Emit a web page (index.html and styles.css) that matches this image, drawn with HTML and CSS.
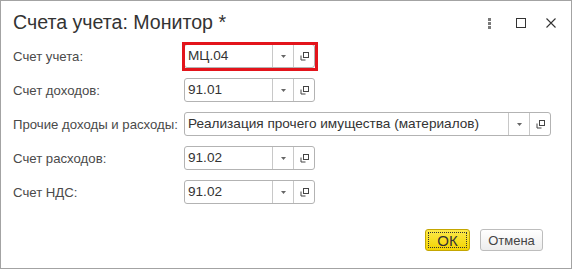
FILE: index.html
```html
<!DOCTYPE html>
<html lang="ru">

<head>
    <meta charset="UTF-8">
    <title>Счета учета: Монитор *</title>
    <link rel="stylesheet" href="styles.css">
</head>

<body>
    <div class="dialog">
        <div class="titlebar">
            <h1 class="title">Счета учета: Монитор *</h1>
            <div class="win-ctrls">
                <svg class="ico-dots" width="3" height="11" viewBox="0 0 3 11">
                    <rect x="0" y="0" width="3" height="3" fill="#7a7a7a" />
                    <rect x="0" y="4" width="3" height="3" fill="#7a7a7a" />
                    <rect x="0" y="8" width="3" height="3" fill="#7a7a7a" />
                </svg>
                <svg class="ico-max" width="10" height="10" viewBox="0 0 10 10">
                    <rect x="0.5" y="0.5" width="9" height="9" fill="none" stroke="#333" />
                </svg>
                <svg class="ico-close" width="10" height="10" viewBox="0 0 10 10">
                    <path d="M0.5 0.5 L9.5 9.5 M9.5 0.5 L0.5 9.5" stroke="#333" stroke-width="1.1" />
                </svg>
            </div>
        </div>

        <div class="form">
            <div class="row">
                <label>Счет учета:</label>
                <div class="field field-short">
                    <span class="val">МЦ.04</span>
                    <span class="fbtn"><svg width="5" height="3" viewBox="0 0 5 3"><path d="M0 0H5L2.5 3Z" fill="#666" /></svg></span>
                    <span class="fbtn"><svg width="9" height="9" viewBox="0 0 9 9"><rect x="3.5" y="0.5" width="5" height="5" fill="none" stroke="#444" /><path d="M1 3.5V8H5.5" fill="none" stroke="#444" /></svg></span>
                </div>
            </div>
            <div class="row">
                <label>Счет доходов:</label>
                <div class="field field-short">
                    <span class="val">91.01</span>
                    <span class="fbtn"><svg width="5" height="3" viewBox="0 0 5 3"><path d="M0 0H5L2.5 3Z" fill="#666" /></svg></span>
                    <span class="fbtn"><svg width="9" height="9" viewBox="0 0 9 9"><rect x="3.5" y="0.5" width="5" height="5" fill="none" stroke="#444" /><path d="M1 3.5V8H5.5" fill="none" stroke="#444" /></svg></span>
                </div>
            </div>
            <div class="row">
                <label>Прочие доходы и расходы:</label>
                <div class="field field-long">
                    <span class="val">Реализация прочего имущества (материалов)</span>
                    <span class="fbtn"><svg width="5" height="3" viewBox="0 0 5 3"><path d="M0 0H5L2.5 3Z" fill="#666" /></svg></span>
                    <span class="fbtn"><svg width="9" height="9" viewBox="0 0 9 9"><rect x="3.5" y="0.5" width="5" height="5" fill="none" stroke="#444" /><path d="M1 3.5V8H5.5" fill="none" stroke="#444" /></svg></span>
                </div>
            </div>
            <div class="row">
                <label>Счет расходов:</label>
                <div class="field field-short">
                    <span class="val">91.02</span>
                    <span class="fbtn"><svg width="5" height="3" viewBox="0 0 5 3"><path d="M0 0H5L2.5 3Z" fill="#666" /></svg></span>
                    <span class="fbtn"><svg width="9" height="9" viewBox="0 0 9 9"><rect x="3.5" y="0.5" width="5" height="5" fill="none" stroke="#444" /><path d="M1 3.5V8H5.5" fill="none" stroke="#444" /></svg></span>
                </div>
            </div>
            <div class="row">
                <label>Счет НДС:</label>
                <div class="field field-short">
                    <span class="val">91.02</span>
                    <span class="fbtn"><svg width="5" height="3" viewBox="0 0 5 3"><path d="M0 0H5L2.5 3Z" fill="#666" /></svg></span>
                    <span class="fbtn"><svg width="9" height="9" viewBox="0 0 9 9"><rect x="3.5" y="0.5" width="5" height="5" fill="none" stroke="#444" /><path d="M1 3.5V8H5.5" fill="none" stroke="#444" /></svg></span>
                </div>
            </div>
        </div>

        <div class="footer">
            <button class="btn btn-ok">ОК</button>
            <button class="btn btn-cancel">Отмена</button>
        </div>

        <div class="highlight"></div>
    </div>
</body>

</html>
```

FILE: styles.css
```css
* {
    margin: 0;
    padding: 0;
    box-sizing: border-box;
}

body {
    background-color: #fff;
    font-family: "Liberation Sans", Arial, sans-serif;
}

.dialog {
    position: relative;
    width: 572px;
    height: 269px;
    border: 1px solid #a3a3a3;
    background-color: #fff;
    display: flex;
    flex-direction: column;
}

.titlebar {
    height: 43px;
    display: flex;
    justify-content: space-between;
    padding-left: 12px;
    padding-right: 15px;
}

.title {
    font-size: 19.6px;
    font-weight: normal;
    line-height: 22px;
    padding-top: 10px;
    color: #333;
}

.win-ctrls {
    display: flex;
    align-items: center;
    height: 43px;
    padding-top: 1px;
}

.ico-dots {
    margin-right: 25px;
}

.ico-max {
    margin-right: 20px;
}

.form {
    display: flex;
    flex-direction: column;
    gap: 10px;
    padding-left: 12px;
}

.row {
    display: flex;
    align-items: center;
    height: 24px;
}

.row label {
    width: 171px;
    flex-shrink: 0;
    font-size: 13.2px;
    color: #4a4a4a;
}

.field {
    display: flex;
    height: 24px;
    border: 1px solid #b3b3b3;
    border-radius: 3px;
    background-color: #fff;
}

.field-short {
    width: 131px;
}

.field-long {
    width: 367px;
}

.val {
    flex: 1;
    padding-left: 3px;
    font-size: 13.6px;
    line-height: 22px;
    color: #333;
    white-space: nowrap;
    overflow: hidden;
}

.fbtn {
    width: 21px;
    display: flex;
    align-items: center;
    justify-content: center;
    border-left: 1px solid #c8c8c8;
}

.footer {
    display: flex;
    justify-content: flex-end;
    gap: 10px;
    margin-top: 25px;
    padding-right: 28px;
}

.btn {
    height: 22px;
    border-radius: 3px;
    font-family: "Liberation Sans", Arial, sans-serif;
    font-size: 13px;
    cursor: pointer;
}

.btn-ok {
    width: 45px;
    font-size: 15px;
    color: #333;
    background: linear-gradient(#fde94a, #f3d300);
    border: 1px solid #c4a600;
    outline: 1px dotted #333;
    outline-offset: -4px;
}

.btn-cancel {
    width: 63px;
    color: #444;
    background: linear-gradient(#fff, #ededed);
    border: 1px solid #bdbdbd;
}

.highlight {
    position: absolute;
    left: 181px;
    top: 41px;
    width: 136px;
    height: 29px;
    border: 3px solid #e3141b;
}
```
